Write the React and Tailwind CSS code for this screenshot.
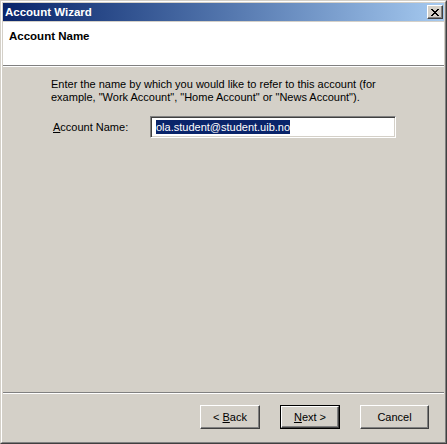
import React from "react";

const font = { fontFamily: '"Liberation Sans", Arial, sans-serif' };

const Button = ({ children, width, isDefault }) => {
  const inner = (
    <div
      className={`flex items-center justify-center h-full border border-t-white border-l-white border-r-[#404040] border-b-[#404040] shadow-[inset_-1px_-1px_0_#808080] bg-[#d4d0c8] text-[11px] text-black`}
    >
      {children}
    </div>
  );
  if (isDefault) {
    return (
      <div className="h-[24px] border border-black" style={{ width }}>
        {inner}
      </div>
    );
  }
  return (
    <div className="h-[24px]" style={{ width }}>
      {inner}
    </div>
  );
};

export default function App() {
  return (
    <div className="w-[447px] h-[444px] bg-[#d4d0c8]" style={font}>
      <div className="w-full h-full border border-t-[#d4d0c8] border-l-[#d4d0c8] border-r-[#404040] border-b-[#404040]">
        <div className="w-full h-full border border-t-white border-l-white border-r-[#808080] border-b-[#808080] p-px flex flex-col">
          {/* title bar */}
          <div className="h-[18px] flex items-center justify-between bg-linear-to-r from-[#0a246a] to-[#a6caf0] pl-[2px] pr-[1px]">
            <span className="text-white font-bold text-[11.5px] leading-none pt-[2px]">
              Account Wizard
            </span>
            <div className="w-[16px] h-[14px] border border-t-white border-l-white border-r-[#404040] border-b-[#404040] shadow-[inset_-1px_-1px_0_#808080] bg-[#d4d0c8] flex items-center justify-center">
              <svg width="8" height="7" viewBox="0 0 8 7" shapeRendering="crispEdges">
                <path
                  d="M0 0h2v1h1v1h2V1h1V0h2v1H7v1H6v1H5v1h1v1h1v1h1v1H6V6H5V5H3v1H2v1H0V6h1V5h1V4h1V3H2V2H1V1H0z"
                  fill="#000"
                />
              </svg>
            </div>
          </div>
          <div className="h-px" />
          {/* header */}
          <div className="h-[43px] bg-white pl-[6px] pt-[9px]">
            <span className="block font-bold text-[11.5px] leading-none text-black">
              Account Name
            </span>
          </div>
          <div className="h-px bg-[#808080]" />
          <div className="h-px bg-white" />
          {/* body */}
          <div className="flex-1 pl-[48px] pt-[11px] text-[11px] text-black">
            <p className="leading-[13px]">
              Enter the name by which you would like to refer to this account (for
              <br />
              example, "Work Account", "Home Account" or "News Account").
            </p>
            <div className="flex items-center mt-[12px]">
              <label className="w-[99px] pl-[2px]">
                <span className="underline">A</span>ccount Name:
              </label>
              <div className="w-[246px] h-[22px] bg-white border border-t-[#808080] border-l-[#808080] border-r-white border-b-white shadow-[inset_1px_1px_0_#404040,inset_-1px_-1px_0_#d4d0c8] flex items-center pl-[5px]">
                <span className="bg-[#0a246a] text-white leading-[14px]">
                  ola.student@student.uib.no
                </span>
              </div>
            </div>
          </div>
          <div className="h-px bg-[#808080]" />
          <div className="h-px bg-white" />
          {/* buttons */}
          <div className="h-[47px] flex justify-end items-start pt-[11px] pr-[15px] gap-[20px]">
            <Button width="60px">
              &lt; <span className="underline ml-[3px]">B</span>ack
            </Button>
            <Button width="60px" isDefault>
              <span className="underline">N</span>ext &gt;
            </Button>
            <Button width="69px">Cancel</Button>
          </div>
        </div>
      </div>
    </div>
  );
}
